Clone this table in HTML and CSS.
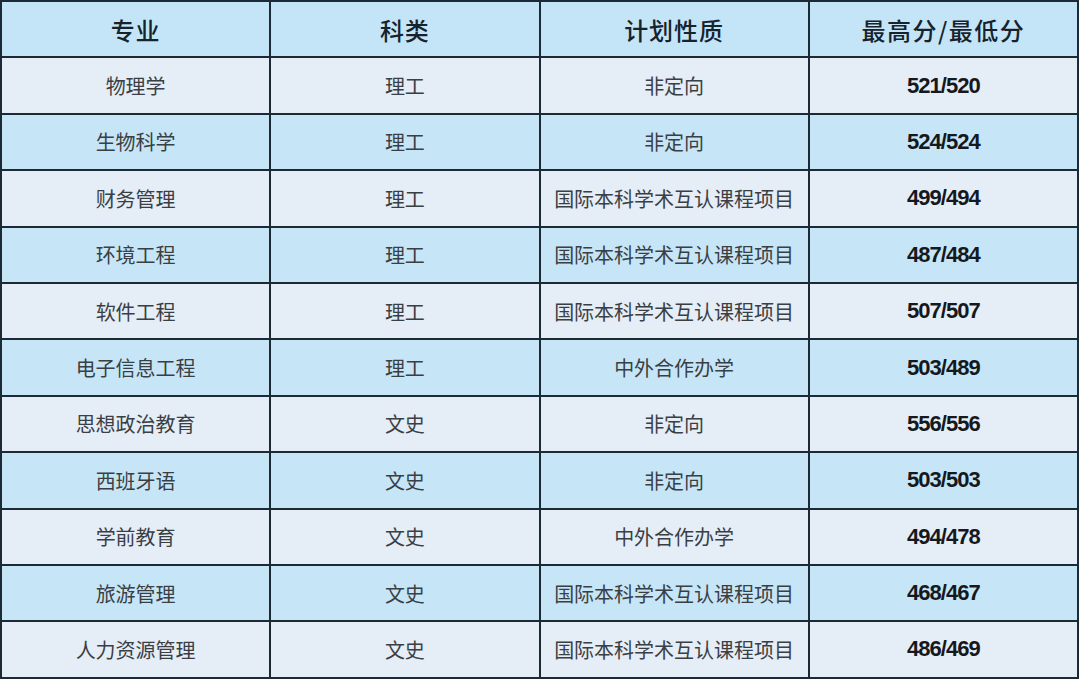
FILE: index.html
```html
<!DOCTYPE html>
<html lang="zh">
<head>
<meta charset="utf-8">
<link rel="stylesheet" href="styles.css">
</head>
<body>
<table class="scores">
  <thead>
    <tr><th>专业</th><th>科类</th><th>计划性质</th><th class="wide">最高分/最低分</th></tr>
  </thead>
  <tbody>
    <tr><td>物理学</td><td>理工</td><td>非定向</td><td class="num">521/520</td></tr>
    <tr><td>生物科学</td><td>理工</td><td>非定向</td><td class="num">524/524</td></tr>
    <tr><td>财务管理</td><td>理工</td><td>国际本科学术互认课程项目</td><td class="num">499/494</td></tr>
    <tr><td>环境工程</td><td>理工</td><td>国际本科学术互认课程项目</td><td class="num">487/484</td></tr>
    <tr><td>软件工程</td><td>理工</td><td>国际本科学术互认课程项目</td><td class="num">507/507</td></tr>
    <tr><td>电子信息工程</td><td>理工</td><td>中外合作办学</td><td class="num">503/489</td></tr>
    <tr><td>思想政治教育</td><td>文史</td><td>非定向</td><td class="num">556/556</td></tr>
    <tr><td>西班牙语</td><td>文史</td><td>非定向</td><td class="num">503/503</td></tr>
    <tr><td>学前教育</td><td>文史</td><td>中外合作办学</td><td class="num">494/478</td></tr>
    <tr><td>旅游管理</td><td>文史</td><td>国际本科学术互认课程项目</td><td class="num">468/467</td></tr>
    <tr><td>人力资源管理</td><td>文史</td><td>国际本科学术互认课程项目</td><td class="num">486/469</td></tr>
  </tbody>
</table>
</body>
</html>
```

FILE: styles.css
```css
html, body {
  margin: 0;
  padding: 0;
  background: #ffffff;
}
.scores {
  margin: 0;
  width: 1079px;
  border-collapse: collapse;
  table-layout: fixed;
  font-family: "Noto Sans CJK SC", "Noto Sans", sans-serif;
}
.scores tr {
  height: 56.4px;
}
.scores th, .scores td {
  border: 2px solid #1c2a35;
  text-align: center;
  vertical-align: middle;
  padding: 0;
}
.scores th {
  background: #c4e5f8;
  color: #16232d;
  font-size: 24px;
  font-weight: 500;
  letter-spacing: 1px;
}
.scores th.wide {
  letter-spacing: 1.5px;
}
.scores td {
  color: #3a3f44;
  font-size: 20px;
  font-weight: 400;
}
.scores tbody tr:nth-child(odd) td {
  background: #e5edf7;
}
.scores tbody tr:nth-child(even) td {
  background: #c6e6f8;
}
.scores td.num {
  font-family: "Liberation Sans", Arial, sans-serif;
  font-weight: 700;
  font-size: 22px;
  letter-spacing: -1px;
  color: #15191d;
}
```
